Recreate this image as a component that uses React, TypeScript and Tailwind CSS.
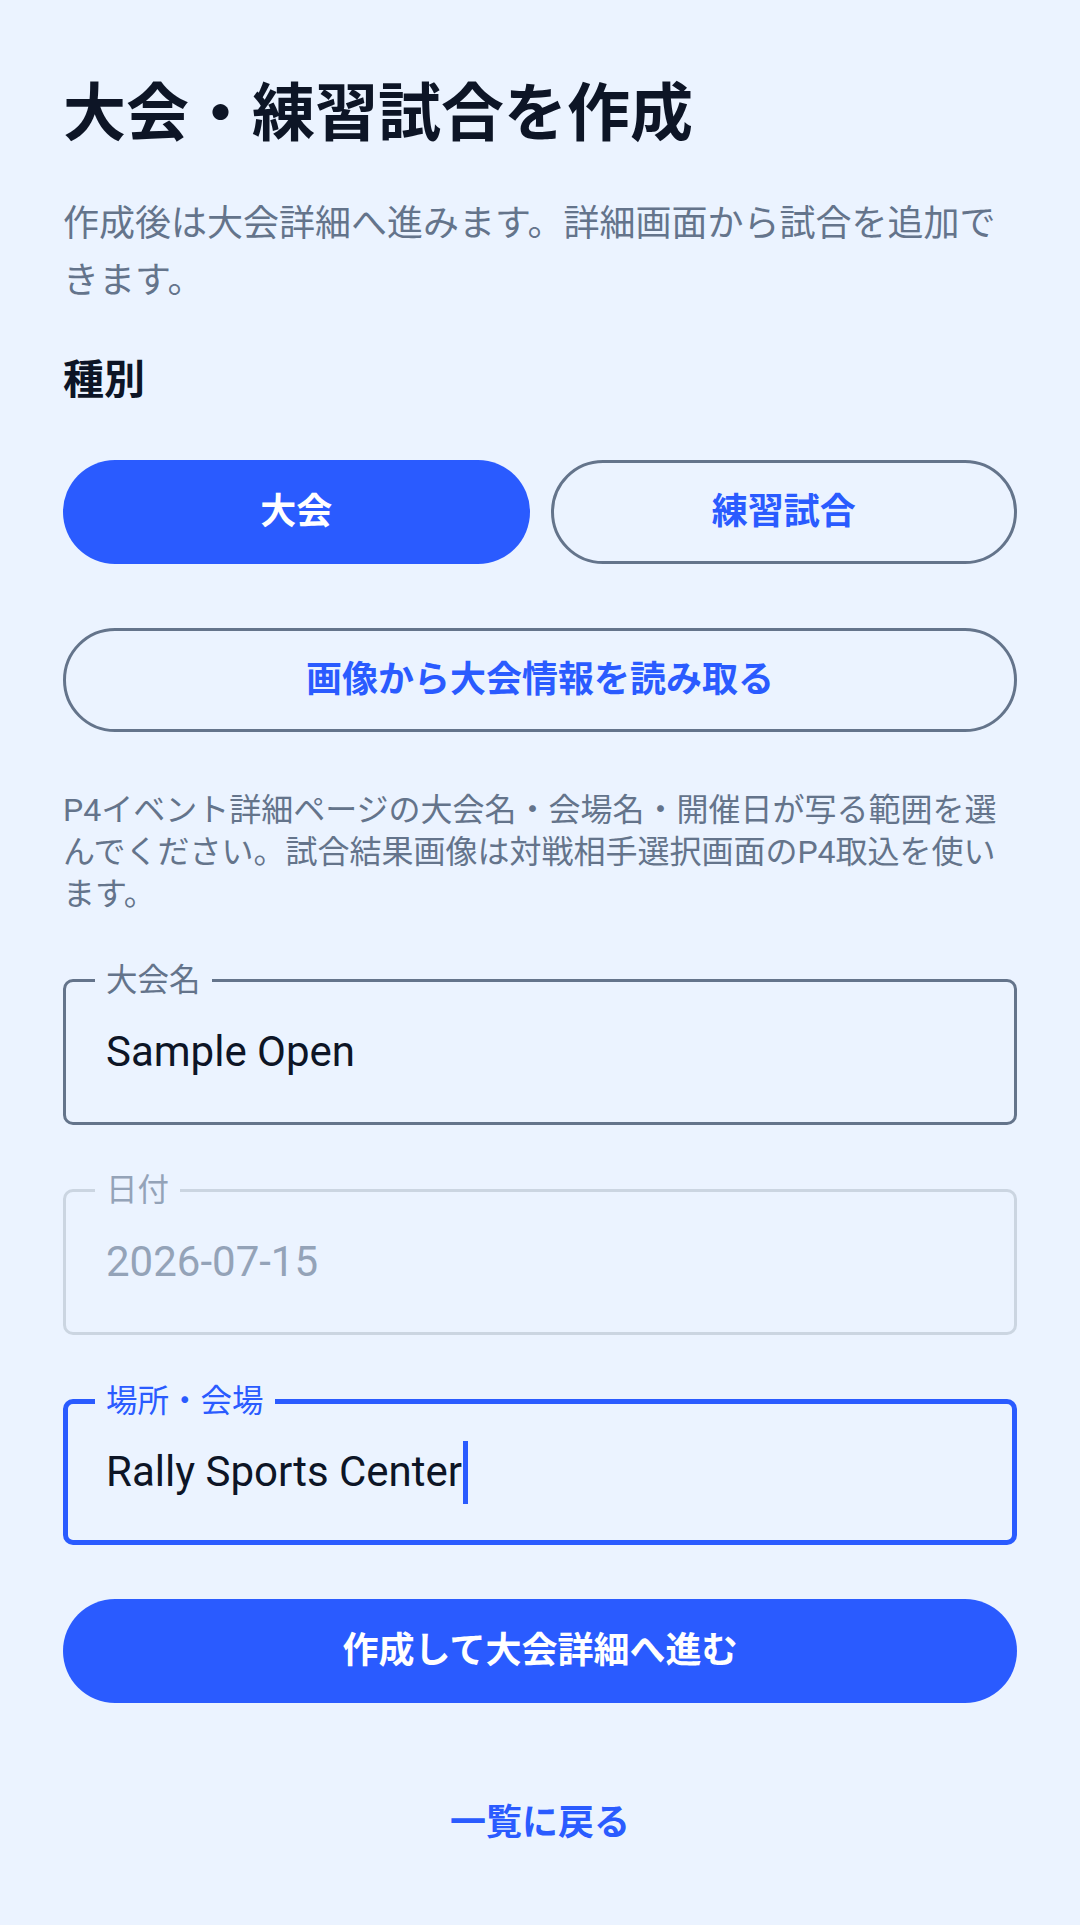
import React from "react";

function Field({
  label,
  value,
  state,
}: {
  label: string;
  value: string;
  state: "normal" | "disabled" | "focused";
}) {
  const box =
    state === "focused"
      ? "border-[5px] border-[#2a5bff]"
      : state === "disabled"
      ? "border-[3px] border-[#cbd5e1]"
      : "border-[3px] border-[#64748b]";
  const labelColor =
    state === "focused"
      ? "text-[#2a5bff]"
      : state === "disabled"
      ? "text-[#94a3b8]"
      : "text-[#64748b]";
  const valueColor = state === "disabled" ? "text-[#94a3b8]" : "text-[#0d1526]";
  const labelTop = state === "focused" ? "top-[-13.5px]" : "top-[-14.5px]";
  return (
    <div className="relative">
      <div
        className={`h-[146px] rounded-[10px] ${box} flex items-center ${
          state === "focused" ? "pl-[38px]" : "pl-[40px]"
        }`}
      >
        <span className={`text-[42px] leading-[56px] ${valueColor} flex items-center`}>
          {value}
          {state === "focused" && (
            <span className="inline-block w-[5px] h-[63px] bg-[#2a5bff] ml-[1px]" />
          )}
        </span>
      </div>
      <span
        className={`absolute ${labelTop} left-[32px] px-[11px] bg-[#ebf3ff] text-[31.5px] leading-[32px] ${labelColor}`}
      >
        {label}
      </span>
    </div>
  );
}

export default function App() {
  return (
    <div className="min-h-[1925px] bg-[#ebf3ff] px-[63px] pt-[74px] font-[Roboto,'Noto_Sans_CJK_JP',sans-serif]">
      <h1 className="text-[63px] leading-[80px] font-bold text-[#0d1526]">
        大会・練習試合を作成
      </h1>
      <p className="mt-[42px] text-[36px] leading-[57px] text-[#64748b]">
        作成後は大会詳細へ進みます。詳細画面から試合を追加できます。
      </p>
      <h2 className="mt-[42px] text-[41px] leading-[56px] font-bold text-[#0d1526]">
        種別
      </h2>
      <div className="mt-[52px] grid grid-cols-2 gap-[21px]">
        <button className="h-[104px] rounded-full bg-[#2a5bff] text-white text-[36px] font-bold flex items-center justify-center">
          大会
        </button>
        <button className="h-[104px] rounded-full border-[3px] border-[#64748b] text-[#2a5bff] text-[36px] font-bold flex items-center justify-center">
          練習試合
        </button>
      </div>
      <button className="mt-[64px] w-full h-[104px] rounded-full border-[3px] border-[#64748b] text-[#2a5bff] text-[36px] font-bold flex items-center justify-center">
        画像から大会情報を読み取る
      </button>
      <p className="mt-[57px] text-[32px] leading-[42px] text-[#64748b]">
        P4イベント詳細ページの大会名・会場名・開催日が写る範囲を選んでください。試合結果画像は対戦相手選択画面のP4取込を使います。
      </p>
      <div className="mt-[64px] flex flex-col gap-[64px]">
        <Field label="大会名" value="Sample Open" state="normal" />
        <Field label="日付" value="2026-07-15" state="disabled" />
        <Field label="場所・会場" value="Rally Sports Center" state="focused" />
      </div>
      <button className="mt-[54px] w-full h-[104px] rounded-full bg-[#2a5bff] text-white text-[36px] font-bold flex items-center justify-center">
        作成して大会詳細へ進む
      </button>
      <div className="mt-[67px] flex justify-center">
        <button className="h-[105px] px-[40px] text-[#2a5bff] text-[36px] font-bold flex items-center justify-center">
          一覧に戻る
        </button>
      </div>
    </div>
  );
}
